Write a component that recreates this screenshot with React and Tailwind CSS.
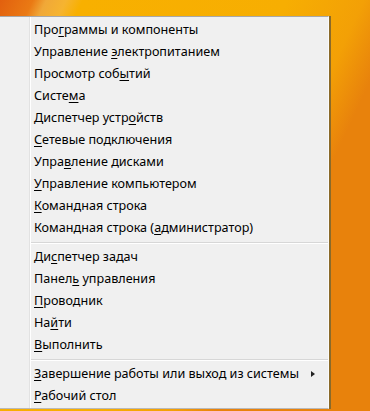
import React from 'react'

// index = the letter with the access-key underline
const GROUPS = [
  [
    ['Программы и компоненты', 3],
    ['Управление электропитанием', 11],
    ['Просмотр событий', 12],
    ['Система', 5],
    ['Диспетчер устройств', 14],
    ['Сетевые подключения', 0],
    ['Управление дисками', 4],
    ['Управление компьютером', 0],
    ['Командная строка', 0],
    ['Командная строка (администратор)', 18]
  ],
  [
    ['Диспетчер задач', 2],
    ['Панель управления', 5],
    ['Проводник', 0],
    ['Найти', 2],
    ['Выполнить', 0]
  ],
  [
    ['Завершение работы или выход из системы', 0, true],
    ['Рабочий стол', 0]
  ]
]

function Item({ label, k, sub }) {
  return (
    <div className="h-[22px] flex items-center pl-[3px] pr-[13px] text-[12.6px] text-black">
      <span>
        {label.slice(0, k)}
        <span className="underline underline-offset-2">{label[k]}</span>
        {label.slice(k + 1)}
      </span>
      {sub && <span className="ml-auto w-0 h-0 border-y-[3.5px] border-y-transparent border-l-[4px] border-l-[#222]" />}
    </div>
  )
}

export default function App() {
  return (
    <div
      className="w-[370px] h-[411px] overflow-hidden pt-4 bg-[linear-gradient(115deg,#e2600e_0px,#ea7a14_30px,#f0a838_42px,#f6b430_60px,#f8b000_75px,#f7ae02_260px,#f3a006_330px,#e8820c_370px)]"
      style={{ fontFamily: '"Noto Sans", "Open Sans", sans-serif' }}
    >
      <div className="w-[329px] h-[393px] flex bg-[#f0f0f0] border-t border-t-[#a8a8a8] border-r border-r-[#fbfbfb] border-b border-b-[#b9b9b9] shadow-[2px_0_0_#8a6a2a]">
        <div className="w-[30px] shrink-0 border-r border-r-[#e2e2e2]" />
        <div className="flex-1 border-l border-l-white pt-[2px]">
          {GROUPS.map((g, gi) => (
            <div key={gi}>
              {gi > 0 && (
                <div className="h-[7px] flex flex-col justify-center">
                  <div className="h-px bg-[#d7d7d7]" />
                  <div className="h-px bg-white" />
                </div>
              )}
              {g.map(([label, k, sub]) => <Item key={label} label={label} k={k} sub={sub} />)}
            </div>
          ))}
        </div>
      </div>
    </div>
  )
}
